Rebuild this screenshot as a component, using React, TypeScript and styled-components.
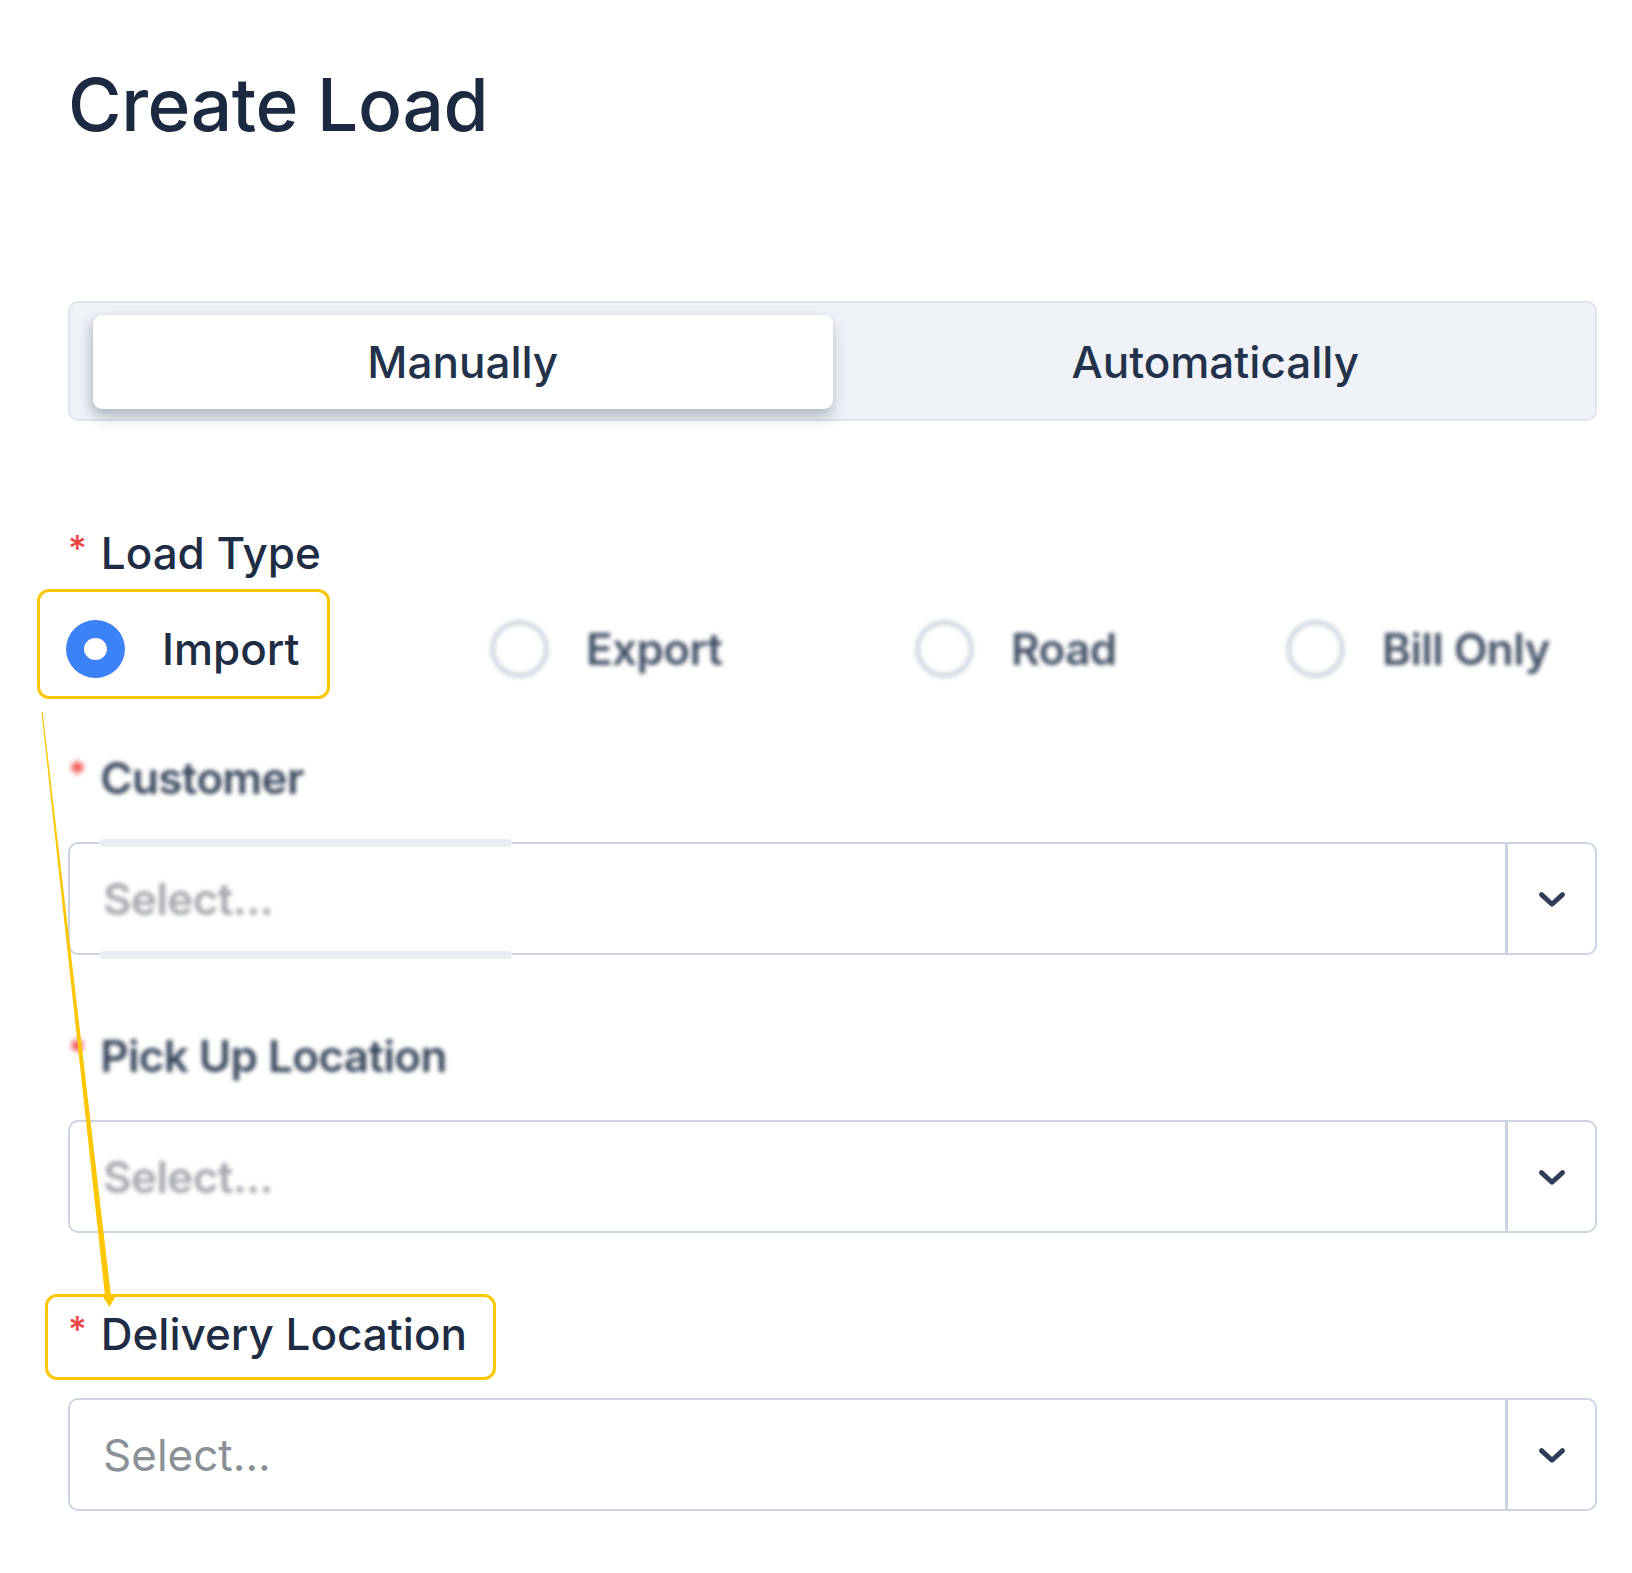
import styled, { createGlobalStyle, css } from "styled-components";

const GlobalStyle = createGlobalStyle`
  body {
    margin: 0;
    background: #ffffff;
    font-family: Inter, "Noto Sans", "Liberation Sans", sans-serif;
    color: #1e2d44;
  }
`;

const Page = styled.div`
  position: relative;
  box-sizing: border-box;
  width: 1632px;
  min-height: 1573px;
  padding: 60px 35px 40px 68px;
`;

const Title = styled.h1`
  margin: 0 0 151px;
  font-size: 73px;
  line-height: 90px;
  font-weight: 500;
  letter-spacing: -0.4px;
  color: #1b2a41;
`;

const ModeTabs = styled.div`
  box-sizing: border-box;
  display: grid;
  grid-template-columns: 1fr 1fr;
  height: 120px;
  padding: 12px 23px 10px;
  background: #eff2f7;
  border: 2px solid #dfe5ed;
  border-radius: 10px;
  margin-bottom: 104px;
`;

const Tab = styled.div<{ $active?: boolean }>`
  display: flex;
  align-items: center;
  justify-content: center;
  height: 94px;
  border-radius: 9px;
  font-size: 44px;
  font-weight: 500;
  color: #22324a;
  ${(p) =>
    p.$active
      ? css`
          background: #ffffff;
          box-shadow: 0 9px 14px rgba(71, 85, 105, 0.3), -4px 2px 8px rgba(71, 85, 105, 0.12);
        `
      : css`
          padding-left: 26px;
        `}
`;

const highlightBox = css<{ $inset: string }>`
  position: relative;
  &::after {
    content: "";
    position: absolute;
    inset: ${(p) => p.$inset};
    border: 3.5px solid #fcc600;
    border-radius: 12px;
    pointer-events: none;
  }
`;

const Field = styled.div`
  display: flex;
  flex-direction: column;
  align-items: flex-start;
  gap: 36px;
  margin-bottom: 73px;
`;

const Label = styled.div<{ $blurred?: boolean; $highlight?: boolean; $inset?: string }>`
  display: inline-flex;
  align-items: flex-start;
  font-size: 44px;
  line-height: 56px;
  font-weight: 500;
  color: #1e2d44;
  ${(p) =>
    p.$blurred &&
    css`
      filter: blur(2px);
      font-weight: 600;
      letter-spacing: -0.6px;
      color: #37465c;
    `}
  ${(p) => p.$highlight && highlightBox}
`;

const Asterisk = styled.span`
  font-size: 36px;
  line-height: 36px;
  margin-top: 5px;
  margin-right: 14px;
  color: #ef4444;
  font-weight: 500;
`;

const RadioGroup = styled.div`
  display: grid;
  grid-template-columns: 424px 425px 371px auto;
  margin: 39px 0 72px -2px;
  height: 58px;
`;

const RadioOption = styled.div<{ $blurred?: boolean; $highlight?: boolean; $inset?: string }>`
  display: flex;
  align-items: center;
  justify-self: start;
  gap: 37px;
  font-size: 44px;
  font-weight: 500;
  color: #1e2d44;
  ${(p) =>
    p.$blurred &&
    css`
      filter: blur(2px);
      font-weight: 600;
      letter-spacing: -0.6px;
      color: #425167;
    `}
  ${(p) => p.$highlight && highlightBox}
`;

const RadioCircle = styled.span<{ $checked?: boolean }>`
  box-sizing: border-box;
  width: 59px;
  height: 58px;
  border-radius: 50%;
  background: #ffffff;
  border: ${(p) => (p.$checked ? "18px solid #3b82f6" : "5px solid #cfd8e3")};
`;

const SelectBox = styled.div<{ $band?: boolean }>`
  position: relative;
  box-sizing: border-box;
  display: flex;
  width: 100%;
  height: 113px;
  border: 2px solid #cbd5e1;
  border-radius: 10px;
  background: #ffffff;
  ${(p) =>
    p.$band &&
    css`
      &::before,
      &::after {
        content: "";
        position: absolute;
        left: 29px;
        width: 413px;
        height: 8px;
        border-radius: 4px;
        background: #e9eef4;
      }
      &::before {
        top: -5px;
      }
      &::after {
        bottom: -6px;
      }
    `}
`;

const Placeholder = styled.div<{ $blurred?: boolean }>`
  flex: 1;
  display: flex;
  align-items: center;
  padding-left: 33px;
  font-size: 44px;
  color: #8b9097;
  ${(p) =>
    p.$blurred &&
    css`
      filter: blur(2px);
      font-weight: 600;
      letter-spacing: -0.6px;
      color: #a3a8ae;
    `}
`;

const ChevronCell = styled.div`
  display: flex;
  align-items: center;
  justify-content: center;
  width: 87px;
  border-left: 3px solid #cbd5e1;
  color: #2d3e56;
`;

const Annotation = styled.svg`
  position: absolute;
  left: 0;
  top: 0;
  width: 200px;
  height: 1400px;
  pointer-events: none;
  overflow: visible;
`;

function Chevron() {
  return (
    <svg width="42" height="42" viewBox="0 0 24 24" fill="none" stroke="currentColor" strokeWidth="2.8" strokeLinecap="round" strokeLinejoin="round">
      <path d="M6 9.5l6 5.5 6-5.5" />
    </svg>
  );
}

interface SelectFieldProps {
  label: string;
  blurred?: boolean;
  band?: boolean;
  highlight?: boolean;
}

function SelectField(props: SelectFieldProps) {
  return (
    <Field>
      <Label $blurred={props.blurred} $highlight={props.highlight} $inset="-12px -29px -18px -23px">
        <Asterisk>*</Asterisk>
        {props.label}
      </Label>
      <SelectBox $band={props.band}>
        <Placeholder $blurred={props.blurred}>Select...</Placeholder>
        <ChevronCell>
          <Chevron />
        </ChevronCell>
      </SelectBox>
    </Field>
  );
}

const loadTypes = ["Import", "Export", "Road", "Bill Only"];

export default function App() {
  return (
    <>
      <GlobalStyle />
      <Page>
        <Title>Create Load</Title>
        <ModeTabs>
          <Tab $active>Manually</Tab>
          <Tab>Automatically</Tab>
        </ModeTabs>

        <Label $inset="0">
          <Asterisk>*</Asterisk>
          Load Type
        </Label>
        <RadioGroup>
          {loadTypes.map((t, i) => (
            <RadioOption key={t} $blurred={i > 0} $highlight={i === 0} $inset="-31px -30px -21px -29px">
              <RadioCircle $checked={i === 0} />
              {t}
            </RadioOption>
          ))}
        </RadioGroup>

        <SelectField label="Customer" blurred band />
        <SelectField label="Pick Up Location" blurred />
        <SelectField label="Delivery Location" highlight />

        <Annotation viewBox="0 0 200 1400">
          <polygon points="41.5,712 42.6,712 111,1296 105,1296" fill="#fcc600" />
          <polygon points="101,1294 117,1294 109.5,1307" fill="#fcc600" />
        </Annotation>
      </Page>
    </>
  );
}
